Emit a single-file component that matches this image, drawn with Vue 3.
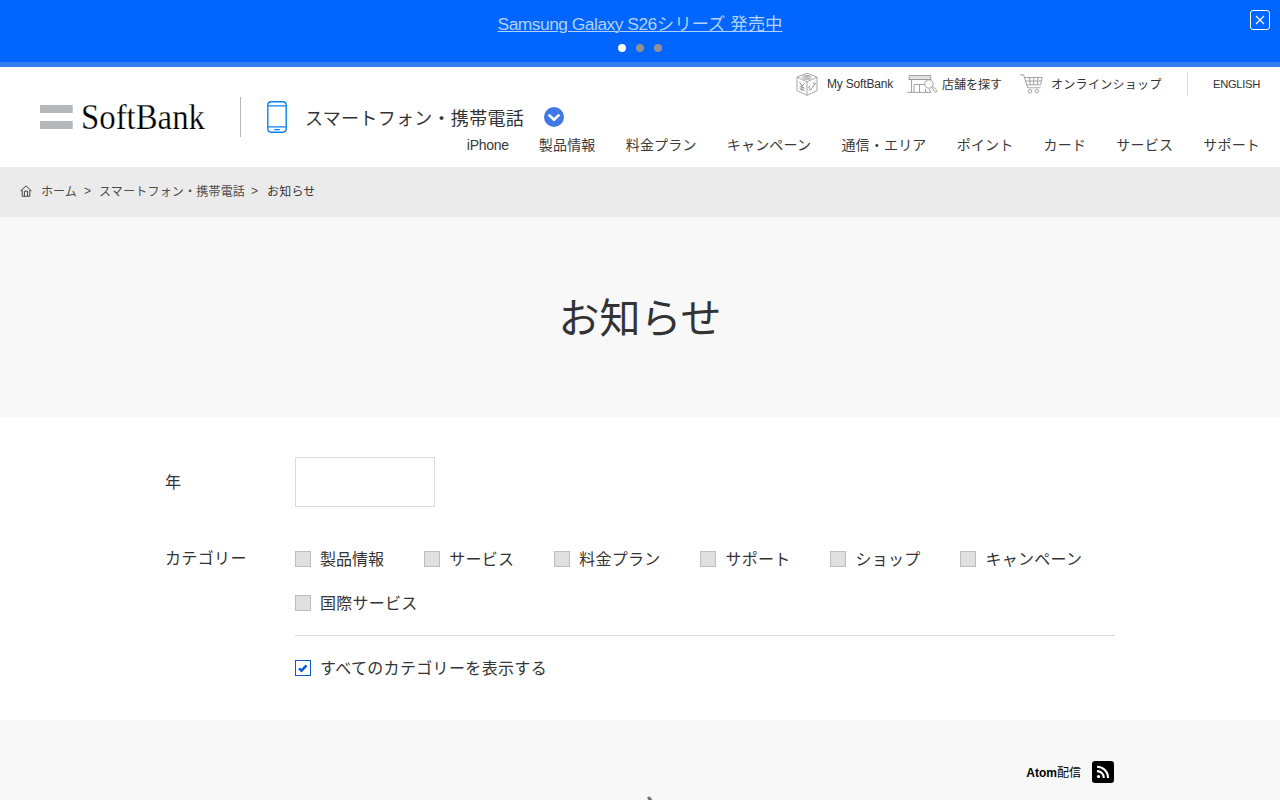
<template>
  <div class="page">
    <!-- Campaign banner -->
    <div v-if="showBanner" class="banner">
      <a href="#" class="banner-link"><span class="latin">Samsung Galaxy S26</span>シリーズ 発売中</a>
      <div class="dots">
        <span v-for="n in 3" :key="n" class="dot" :class="{ active: n === slide }" @click="slide = n"></span>
      </div>
      <button class="banner-close" aria-label="閉じる" @click="showBanner = false">
        <svg width="10" height="10" viewBox="0 0 10 10">
          <path d="M1 1l8 8M9 1L1 9" fill="none" stroke="#fff" stroke-width="1.1" />
        </svg>
      </button>
    </div>

    <header class="header">
      <div class="brand">
        <svg class="logo" width="166" height="48" viewBox="0 0 166 48">
          <path d="M0 12h32.7v8H0zM0 28h32.7v8H0z" fill="#b4b8bb" />
          <text x="41" y="36" textLength="124" lengthAdjust="spacingAndGlyphs">SoftBank</text>
        </svg>
        <span class="brand-line"></span>
        <svg class="phone" width="20" height="32" viewBox="0 0 20 32">
          <rect x="0.8" y="0.8" width="18.4" height="30.4" rx="3.4" fill="none" stroke="#0c80f2" stroke-width="1.4" />
          <path d="M1 4.8h18M1 25.8h18M7.2 28.6h5.6" fill="none" stroke="#0c80f2" stroke-width="1.3" />
        </svg>
        <span class="brand-title">スマートフォン・携帯電話</span>
        <svg class="toggle" width="20" height="20" viewBox="0 0 20 20">
          <circle cx="10" cy="10" r="10" fill="#4178e6" />
          <path d="M4.6 7.6l5.4 5.2 5.4-5.2" fill="none" stroke="#fff" stroke-width="2.6" />
        </svg>
      </div>

      <div class="menus">
        <div class="tools">
          <a href="#" class="tool my">
            <svg width="22" height="24" viewBox="0 0 22 24">
              <g fill="none" stroke="#8f8f8f" stroke-width="0.8">
                <path d="M11 1.2l10 4v13.5l-10 4.6-10-4.6V5.2zM1 5.2l10 4.6 10-4.6M11 9.8v13.5" />
                <rect x="6.8" y="3.6" width="8" height="3.6" rx="1.8" />
                <path d="M8.4 5.4c0-1.6 2.3-1 2.3 0s2.5 1.6 2.5 0-2.5-1-2.5 0-2.3 1.6-2.3 0" />
                <path d="M3.5 10l2.5 4 2.5-2.5M6 14v5M3.7 14.4l4.8 1.8M3.7 16.6l4.8 1.8" stroke-width="1" />
                <path d="M13 17.5l1.5.7 4-5.7M14.2 14.2c-1.5-.2-1.7 1.6-.8 2.5M18 10.2c-.8.8-.3 2.3.8 2.3l.8-1.5" stroke-width="1" />
              </g>
            </svg>
            <span>My SoftBank</span>
          </a>
          <a href="#" class="tool shop">
            <svg width="31" height="18" viewBox="0 0 31 18">
              <g fill="none" stroke="#999" stroke-width="0.9">
                <rect x="2.2" y="0.6" width="21.5" height="3.8" fill="#e5e5e5" />
                <path d="M1.5 4.5h23M4.5 4.5v12.5M0 17.4h21.5M7 17V9.5h11.5M12.5 9.5V17M18.5 14v3" />
                <circle cx="22" cy="9" r="4.2" fill="#fff" />
                <path d="M24.7 12.2l1-.9 4.6 4.5-1.6 1.7zM22 14l2 3.4h-5" />
              </g>
            </svg>
            <span>店舗を探す</span>
          </a>
          <a href="#" class="tool cart">
            <svg width="23" height="20" viewBox="0 0 23 20">
              <g fill="none" stroke="#999" stroke-width="0.9">
                <path d="M0 .8h3.5l4.2 13h12.8M4.5 3.5h17.6l-1.5 7.3H6.8M5.4 7h16M9.5 3.5l.8 7.3M13.7 3.5v7.3M18 3.5l-.8 7.3" />
                <circle cx="10" cy="17.2" r="1.7" />
                <circle cx="16.8" cy="17.2" r="1.7" />
              </g>
            </svg>
            <span>オンラインショップ</span>
          </a>
          <a href="#" class="tool english">ENGLISH</a>
        </div>
        <nav class="nav">
          <a v-for="item in navItems" :key="item" href="#" :class="{ latin: item === 'iPhone' }">{{ item }}</a>
        </nav>
      </div>
    </header>

    <div class="breadcrumb">
      <svg width="12" height="12" viewBox="0 0 12 12">
        <path d="M.4 6L6 .9 11.6 6M2.2 5v6.3h7.6V5M4.4 11V6.2h3.2V11" fill="none" stroke="#444" stroke-width="1" />
      </svg>
      <a href="#" class="crumb-home">ホーム</a>
      <span class="sep">&gt;</span>
      <a href="#" class="crumb-mobile">スマートフォン・携帯電話</a>
      <span class="sep">&gt;</span>
      <span class="current">お知らせ</span>
    </div>

    <div class="hero">
      <h1>お知らせ</h1>
    </div>

    <!-- Filters -->
    <section class="filters">
      <div class="row year-row">
        <div class="label">年</div>
        <div class="year"></div>
      </div>
      <div class="row category-row">
        <div class="label">カテゴリー</div>
        <div class="categories">
          <div class="list">
            <label v-for="cat in categories" :key="cat.name" class="check" :class="{ kanji: cat.kanji }">
              <span class="box"></span><span class="name">{{ cat.name }}</span>
            </label>
          </div>
          <label class="check all">
            <span class="box checked">
              <svg width="14" height="14" viewBox="0 0 14 14">
                <path d="M3 7.4l2.5 2.3 5-5.4" fill="none" stroke="#0b5bd3" stroke-width="2.5" />
              </svg>
            </span><span class="name">すべてのカテゴリーを表示する</span>
          </label>
        </div>
      </div>
    </section>

    <section class="results">
      <a href="#" class="feed">
        <span class="feed-name"><b>Atom</b>配信</span>
        <svg width="22" height="22" viewBox="0 0 22 22">
          <rect width="22" height="22" rx="3.2" />
          <circle cx="6.5" cy="15.5" r="1.6" fill="#fff" />
          <path d="M5 10.1a6.7 6.7 0 0 1 6.8 6.8M5 5.8a11 11 0 0 1 11.1 11.1" fill="none" stroke="#fff" stroke-width="2.1" />
        </svg>
      </a>
      <!-- Loading spinner, starts just above the fold -->
      <svg class="spinner" width="40" height="40" viewBox="0 0 40 40">
        <path d="M27.2 2.4q1.8-2 3.6 0l3 5-4 2z" fill="#747b83" />
        <circle cx="36" cy="14" r="2.6" fill="#9aa0a6" />
      </svg>
    </section>
  </div>
</template>

<script setup>
import { ref } from 'vue'

const showBanner = ref(true)
const slide = ref(1)

const navItems = [
  'iPhone',
  '製品情報',
  '料金プラン',
  'キャンペーン',
  '通信・エリア',
  'ポイント',
  'カード',
  'サービス',
  'サポート',
]

const categories = [
  { name: '製品情報', kanji: true },
  { name: 'サービス' },
  { name: '料金プラン' },
  { name: 'サポート' },
  { name: 'ショップ' },
  { name: 'キャンペーン' },
  { name: '国際サービス' },
]
</script>

<style>
body {
  overflow: hidden;
}
</style>

<style scoped>
.page {
  height: 800px;
  overflow: hidden;
  background: #fff;
  color: #333;
  font-family: "Liberation Sans", "Noto Sans CJK JP", sans-serif;
  font-size: 16px;
  font-weight: 400;
}

.page * {
  box-sizing: border-box;
}

a {
  color: inherit;
  text-decoration: none;
}

svg {
  display: block;
  flex: none;
}

.banner {
  position: relative;
  display: flex;
  flex-direction: column;
  align-items: center;
  height: 67px;
  padding-top: 12px;
  background: #0066ff;
  border-bottom: 5px solid #337eee;
}

.banner-link {
  color: #b3d1ff;
  font-size: 17.4px;
  line-height: 24px;
  white-space: nowrap;
  text-decoration: underline;
  text-decoration-thickness: 1px;
}

.banner-link .latin {
  letter-spacing: -0.5px;
}

.dots {
  display: flex;
  gap: 10px;
  margin-top: 8px;
}

.dot {
  width: 8px;
  height: 8px;
  border-radius: 50%;
  background: #919191;
}

.dot.active {
  background: #fff;
}

.banner-close {
  position: absolute;
  top: 10px;
  right: 10px;
  display: flex;
  align-items: center;
  justify-content: center;
  width: 20px;
  height: 20px;
  padding: 0;
  background: none;
  border: 1px solid #fff;
  border-radius: 3px;
}

/* brand and menus share one grid cell, the nav runs below the brand title */
.header {
  display: grid;
  height: 100px;
}

.brand,
.menus {
  grid-area: 1 / 1;
}

.brand {
  display: flex;
  align-items: center;
  padding-left: 40px;
}

.logo {
  overflow: visible;
}

.logo text {
  font-family: "Liberation Serif", serif;
  font-size: 35px;
  font-weight: 400;
  fill: #000;
  stroke: #fff;
  stroke-width: 0.25px;
}

.brand-line {
  width: 1px;
  height: 40px;
  margin: 0 26px 0 34px;
  background: #b4b8bb;
}

.brand-title {
  width: 221px;
  margin: 0 18px 0 18px;
  font-size: 18px;
  letter-spacing: 0.3px;
  white-space: nowrap;
}

.menus {
  display: flex;
  flex-direction: column;
  align-items: flex-end;
  padding: 5px 20px 0 0;
}

.tools {
  display: flex;
  height: 24px;
  font-size: 12px;
}

.tool {
  display: flex;
  align-items: center;
  white-space: nowrap;
}

.tool span {
  margin-top: -1px;
}

.my {
  width: 111px;
  gap: 9px;
  letter-spacing: -0.18px;
}

.my span {
  margin-top: 0;
}

.shop {
  width: 113px;
  gap: 4px;
}

.cart {
  width: 167px;
  gap: 8px;
  letter-spacing: 0.3px;
}

.english {
  width: 73px;
  padding-left: 25px;
  border-left: 1px solid #d4dade;
  font-size: 11.2px;
  letter-spacing: -0.3px;
}

.nav {
  display: flex;
  gap: 30.2px;
  margin-top: 37px;
  font-size: 14px;
  line-height: 24px;
  letter-spacing: 0.18px;
  color: #3a3a3a;
  white-space: nowrap;
}

.nav .latin {
  letter-spacing: -0.3px;
}

.breadcrumb {
  display: flex;
  align-items: center;
  height: 50px;
  padding: 0 20px 3px;
  background: #ebebeb;
  color: #4c4c4c;
  font-size: 12px;
  white-space: nowrap;
}

.crumb-home {
  width: 43px;
  margin-left: 9px;
}

.sep {
  width: 15px;
}

.crumb-mobile {
  width: 152px;
  letter-spacing: 0.2px;
}

.current {
  margin-left: 1px;
  color: #333;
  letter-spacing: 0.2px;
}

.hero {
  display: flex;
  align-items: center;
  justify-content: center;
  height: 200px;
  padding-bottom: 5px;
  background: #f8f8f8;
}

h1 {
  margin: 0;
  font-size: 41px;
  font-weight: 400;
}

.filters {
  height: 303px;
  padding: 40px 165px 0;
}

.row {
  display: flex;
}

.label {
  width: 130px;
  letter-spacing: 0.35px;
}

.year-row {
  align-items: center;
}

.year-row .label {
  padding-bottom: 2px;
}

.year {
  width: 140px;
  height: 50px;
  border: 1px solid #dcdcdc;
}

.category-row {
  margin-top: 40px;
  line-height: 24px;
}

.categories {
  width: 820px;
}

.list {
  display: flex;
  flex-wrap: wrap;
  gap: 20px 40px;
  padding-bottom: 20px;
  border-bottom: 1px solid #dcdcdc;
}

.check {
  display: flex;
  align-items: center;
  height: 24px;
  letter-spacing: 0.25px;
  white-space: nowrap;
}

.check.kanji {
  letter-spacing: 0.03px;
}

.box {
  flex: none;
  width: 16px;
  height: 16px;
  margin-right: 9px;
  background: #e0e0e0;
  border: 1px solid #bebebe;
}

.box.checked {
  background: #fff;
  border-color: #0b5bd3;
}

.name {
  padding-top: 1px;
}

.all {
  margin-top: 20px;
  letter-spacing: 0.34px;
}

.results {
  display: flex;
  flex-direction: column;
  height: 80px;
  padding: 41px 166px 0;
  background: #f8f8f8;
}

.feed {
  display: flex;
  align-items: center;
  align-self: flex-end;
  gap: 11px;
  color: #000;
  font-size: 12px;
}

.feed-name {
  padding-bottom: 1px;
}

.feed b {
  font-weight: 700;
}

.spinner {
  align-self: center;
  margin-top: 12px;
}
</style>
